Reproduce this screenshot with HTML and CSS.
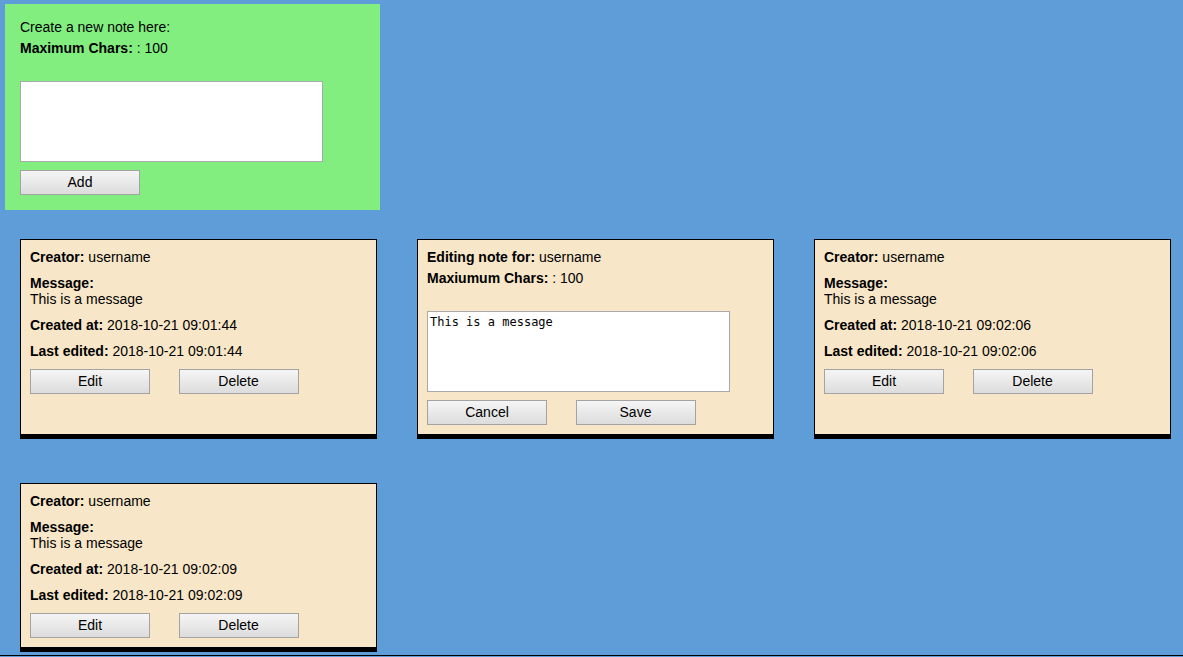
FILE: index.html
```html
<!DOCTYPE html>
<html>
<head>
<meta charset="utf-8">
<title>Notes</title>
<link rel="stylesheet" href="styles.css">
</head>
<body>
<div class="page">
  <section class="create">
    <div class="line">Create a new note here:</div>
    <div class="line second"><b>Maximum Chars:</b> : 100</div>
    <textarea class="area"></textarea>
    <div class="actions"><button class="btn">Add</button></div>
  </section>

  <div class="notes">
    <article class="note">
      <div class="field"><b>Creator:</b> username</div>
      <div class="field"><b>Message:</b><br>This is a message</div>
      <div class="field"><b>Created at:</b> 2018-10-21 09:01:44</div>
      <div class="field"><b>Last edited:</b> 2018-10-21 09:01:44</div>
      <div class="actions"><button class="btn">Edit</button><button class="btn">Delete</button></div>
    </article>

    <article class="note">
      <div class="line"><b>Editing note for:</b> username</div>
      <div class="line second"><b>Maxiumum Chars:</b> : 100</div>
      <textarea class="area mono">This is a message</textarea>
      <div class="actions"><button class="btn">Cancel</button><button class="btn">Save</button></div>
    </article>

    <article class="note">
      <div class="field"><b>Creator:</b> username</div>
      <div class="field"><b>Message:</b><br>This is a message</div>
      <div class="field"><b>Created at:</b> 2018-10-21 09:02:06</div>
      <div class="field"><b>Last edited:</b> 2018-10-21 09:02:06</div>
      <div class="actions"><button class="btn">Edit</button><button class="btn">Delete</button></div>
    </article>

    <article class="note">
      <div class="field"><b>Creator:</b> username</div>
      <div class="field"><b>Message:</b><br>This is a message</div>
      <div class="field"><b>Created at:</b> 2018-10-21 09:02:09</div>
      <div class="field"><b>Last edited:</b> 2018-10-21 09:02:09</div>
      <div class="actions"><button class="btn">Edit</button><button class="btn">Delete</button></div>
    </article>
  </div>
  <div class="rule"></div>
</div>
</body>
</html>
```

FILE: styles.css
```css
html, body {
  margin: 0;
  padding: 0;
  background: #5f9dd9;
  height: 100%;
  overflow: hidden;
}

body {
  font-family: "Liberation Sans", Arial, sans-serif;
  font-size: 14px;
  line-height: 16px;
  color: #000;
}

.page {
  padding: 4px 0 0 0;
}

.create {
  width: 375px;
  margin-left: 5px;
  box-sizing: border-box;
  padding: 15px;
  background: #82ee80;
}

.line {
  height: 16px;
}

.line.second {
  margin-top: 5px;
}

.area {
  display: block;
  box-sizing: border-box;
  width: 303px;
  height: 81px;
  margin: 25px 0 0 0;
  padding: 2px;
  border: 1px solid #a9a9a9;
  background: #fff;
  resize: none;
  font-family: "Liberation Sans", Arial, sans-serif;
  font-size: 13px;
}

.area.mono {
  font-family: "DejaVu Sans Mono", "Liberation Mono", monospace;
  font-size: 12px;
  line-height: 14px;
  padding: 3px 2px;
  color: #000;
}

.actions {
  display: flex;
  gap: 28.5px;
  margin-top: 8px;
}

.note .field + .actions {
  margin-top: 10px;
}

.btn {
  box-sizing: border-box;
  width: 120px;
  height: 25px;
  padding: 0 0 1px 0;
  border: 1px solid #a3a3a3;
  border-radius: 0;
  background: linear-gradient(#f5f5f5, #dcdcdc);
  font-family: "Liberation Sans", Arial, sans-serif;
  font-size: 14px;
  line-height: 16px;
  color: #000;
}

.notes {
  display: grid;
  grid-template-columns: repeat(3, 357px);
  column-gap: 40px;
  row-gap: 44px;
  margin: 29px 0 0 20px;
  align-items: stretch;
}

.note {
  box-sizing: border-box;
  background: #f7e6c7;
  border: 1px solid #000;
  border-bottom-width: 5px;
  padding: 9px;
}

.field {
  margin-bottom: 10px;
}

.field:nth-last-child(2) {
  margin-bottom: 0;
}

.rule {
  margin-top: 3px;
  border-top: 1px solid #000;
}
```
